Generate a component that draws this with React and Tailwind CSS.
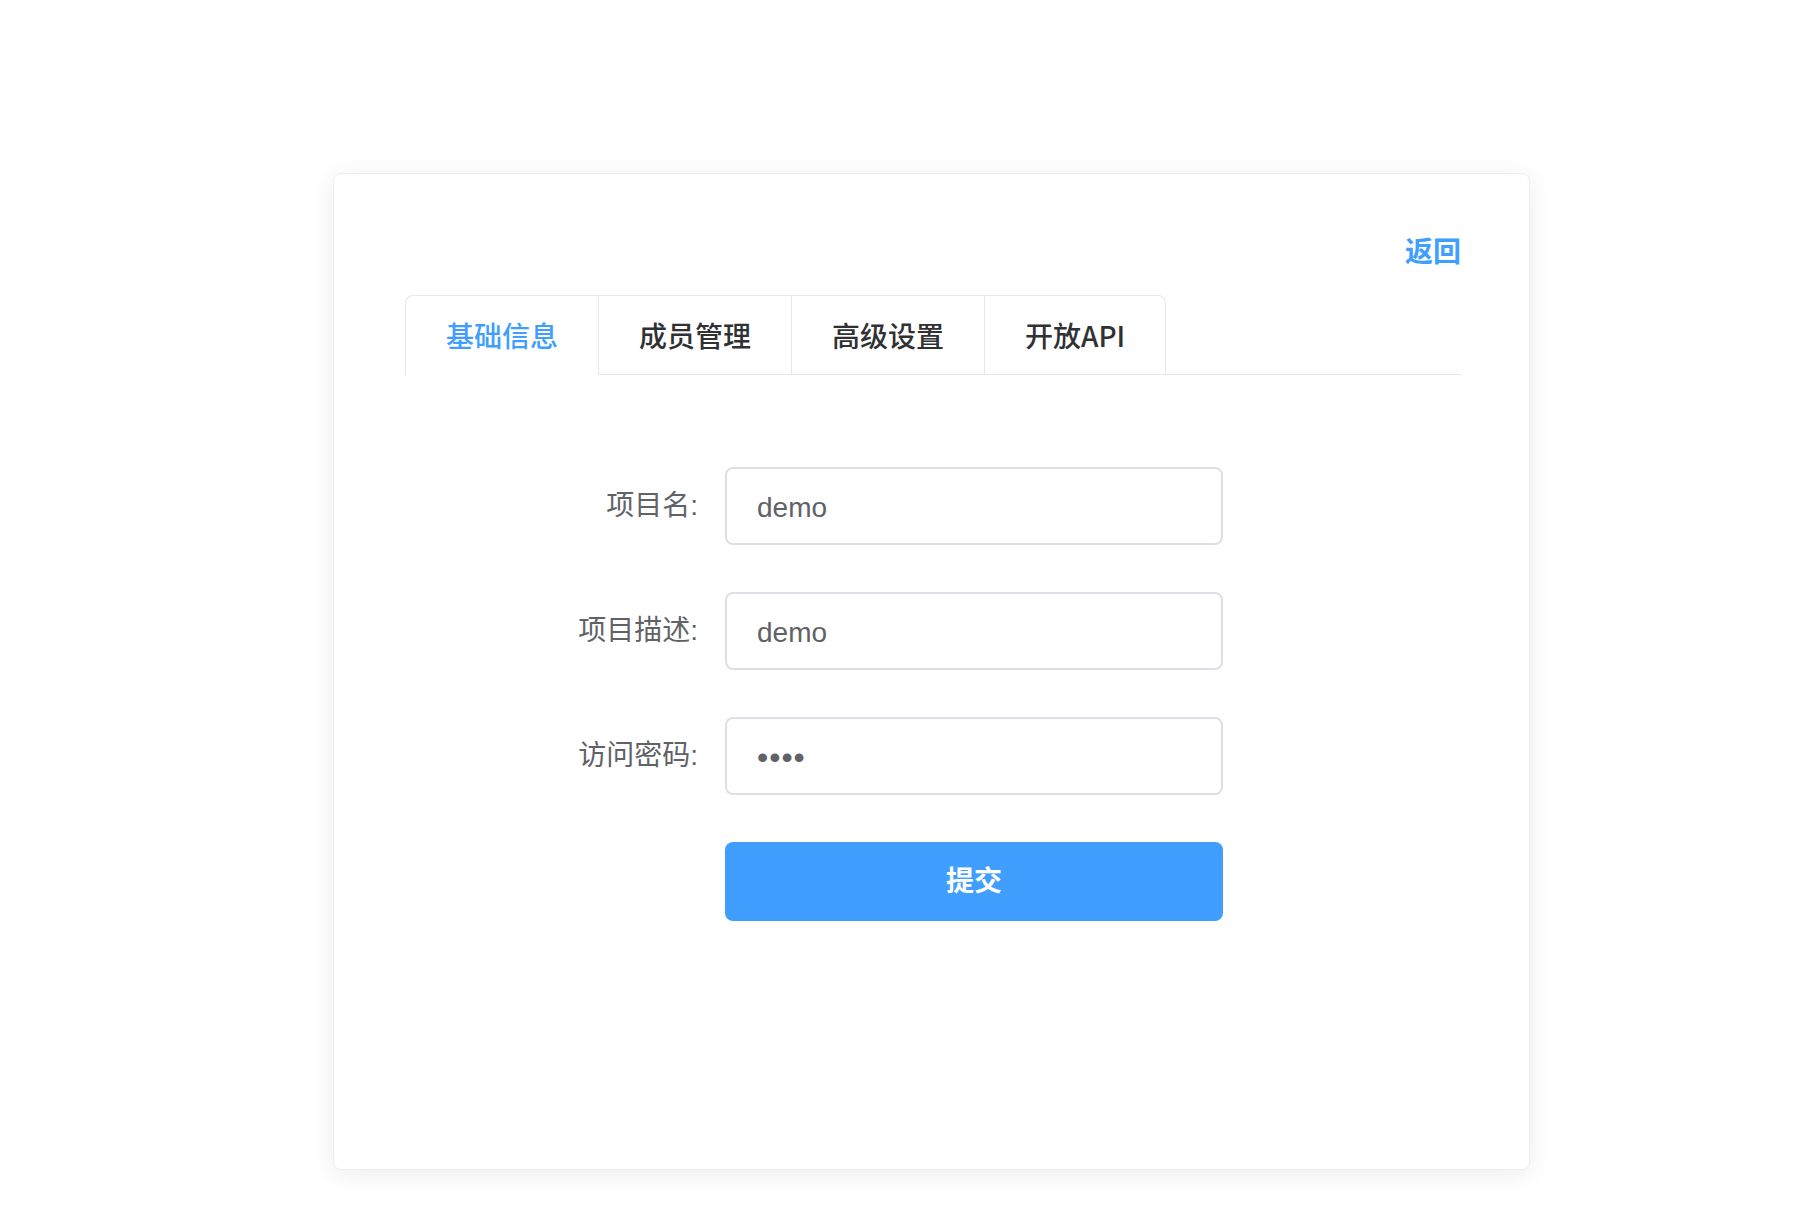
import React from 'react'

const tabs = ['基础信息', '成员管理', '高级设置', '开放API']

const fields = [
  { label: '项目名:', value: 'demo', type: 'text' },
  { label: '项目描述:', value: 'demo', type: 'text' },
  { label: '访问密码:', value: 'demo', type: 'password' },
]

export default function App() {
  return (
    <div className="min-h-[1232px] bg-white pt-[173px] pl-[333px] font-['Liberation_Sans','Noto_Sans_CJK_SC',sans-serif]">
      <div className="w-[1197px] h-[997px] bg-white border border-[#ebeef5] rounded-lg shadow-[0_4px_24px_0_rgba(0,0,0,0.08)] pl-[71px] pr-[68px] pt-[59px]">
        <div className="flex justify-end">
          <a className="text-[28px] leading-[40px] font-semibold text-[#409eff] cursor-pointer">返回</a>
        </div>

        {/* tabs */}
        <div className="mt-[22px] flex border-b border-[#e4e7ed]">
          <div className="flex -mb-px border border-b-0 border-[#e4e7ed] rounded-t-lg font-['Noto_Sans_CJK_SC',sans-serif]">
            {tabs.map((t, i) => (
              <div
                key={t}
                className={`h-[79px] flex items-center px-[40px] text-[28px] font-medium border-b ${
                  i > 0 ? 'border-l border-l-[#e4e7ed]' : ''
                } ${i === 0 ? 'text-[#409eff] border-b-white' : 'text-[#303133] border-b-[#e4e7ed]'}`}
              >
                {t}
              </div>
            ))}
          </div>
        </div>

        {/* form */}
        <div className="mt-[92px] flex flex-col gap-[47px]">
          {fields.map((f) => (
            <div key={f.label} className="flex items-center">
              <label className="w-[320px] pr-[27px] text-right text-[28px] text-[#606266]">{f.label}</label>
              <input
                type={f.type}
                value={f.value}
                readOnly
                className={`w-[498px] h-[78px] px-[30px] pt-[3px] border-2 border-[#dcdfe6] rounded-lg text-[#606266] outline-none bg-white ${
                  f.type === 'password' ? 'text-[32px] tracking-[1px]' : 'text-[28px]'
                }`}
              />
            </div>
          ))}
          <div className="flex">
            <div className="w-[320px]" />
            <button className="w-[498px] h-[79px] rounded-lg bg-[#409eff] text-white text-[28px] font-bold">
              提交
            </button>
          </div>
        </div>
      </div>
    </div>
  )
}
